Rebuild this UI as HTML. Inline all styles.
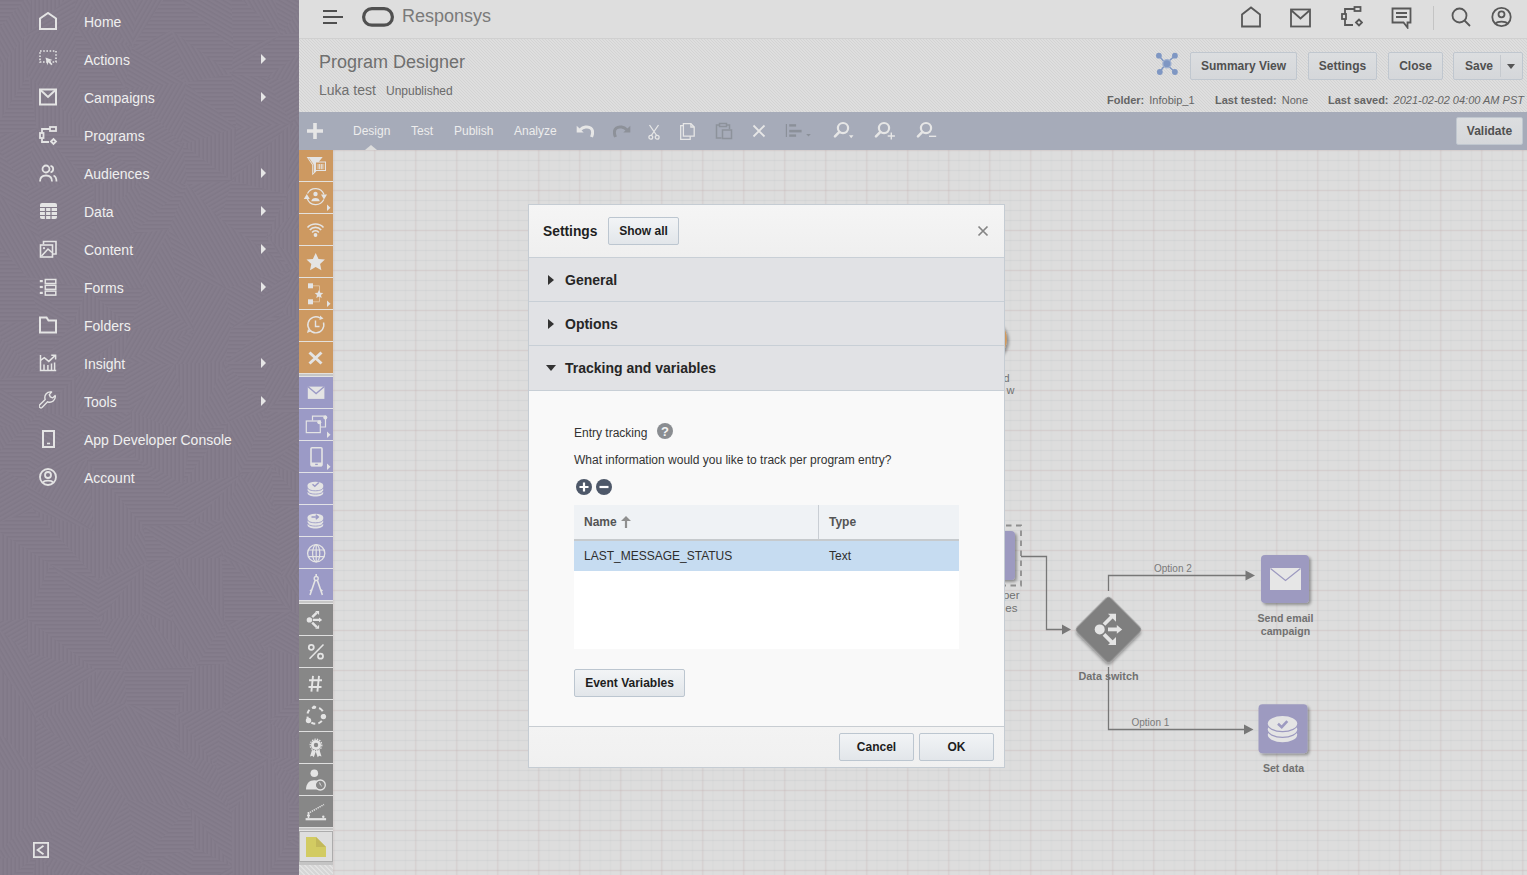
<!DOCTYPE html>
<html><head><meta charset="utf-8">
<style>
*{box-sizing:border-box;margin:0;padding:0}
html,body{width:1527px;height:875px;overflow:hidden}
body{position:relative;font-family:"Liberation Sans",sans-serif;background:#dcdcdc}
.a{position:absolute}
.t{position:absolute;white-space:nowrap;line-height:1}
#side{left:0;top:0;width:299px;height:875px;background:#857d8c}
#side .t{left:84px;font-size:14px;color:#efefef}
#side .ar{position:absolute;left:261px;width:0;height:0;border-left:5px solid #e6e6e6;border-top:5px solid transparent;border-bottom:5px solid transparent}
#side svg{position:absolute;left:39px}
#top{left:299px;top:0;width:1228px;height:39px;background:#dedede;border-bottom:1px solid #d0d0d0}
#ph{left:299px;top:39px;width:1228px;height:73px;background:#dedede;
}
#tb{left:299px;top:112px;width:1228px;height:38px;background:#a6abb9}
#cv{left:333px;top:150px;width:1194px;height:725px;background:#dddddd}
#pal{left:299px;top:150px;width:34px;height:725px;background:#dcdcdc}
.btn{position:absolute;border:1px solid #c0c7cf;border-radius:2px;background:linear-gradient(#dcdee0,#d5d7da);color:#505050;font-size:12px;font-weight:bold;text-align:center}
#dlg{left:528px;top:204px;width:477px;height:564px;background:#f9f9f9;border:1px solid #c5ccd3}
.dbtn{position:absolute;border:1px solid #bcc6d0;border-radius:2px;background:linear-gradient(#f2f4f6,#e2e6ea);color:#1d1d1d;font-size:12px;font-weight:bold;text-align:center}
.sec{position:absolute;left:0;width:475px;height:44px;background:#e1e2e5;border-bottom:1px solid #c8cfd6}
.sec .t{font-size:14px;font-weight:bold;color:#262626;left:36px;top:15px}
.tri{position:absolute;width:0;height:0}
</style></head><body>

<!-- SIDEBAR -->
<div id="side" class="a">
<svg class="a" style="left:0;top:0" width="299" height="875"><defs><pattern id="sp0" width="4" height="4" patternUnits="userSpaceOnUse" patternTransform="rotate(0)"><rect width="4" height="1.6" fill="#7b7382"/></pattern><pattern id="sp1" width="4" height="4" patternUnits="userSpaceOnUse" patternTransform="rotate(30)"><rect width="4" height="1.6" fill="#7b7382"/></pattern><pattern id="sp2" width="4" height="4" patternUnits="userSpaceOnUse" patternTransform="rotate(60)"><rect width="4" height="1.6" fill="#7b7382"/></pattern><pattern id="sp3" width="4" height="4" patternUnits="userSpaceOnUse" patternTransform="rotate(90)"><rect width="4" height="1.6" fill="#7b7382"/></pattern><pattern id="sp4" width="4" height="4" patternUnits="userSpaceOnUse" patternTransform="rotate(120)"><rect width="4" height="1.6" fill="#7b7382"/></pattern><pattern id="sp5" width="4" height="4" patternUnits="userSpaceOnUse" patternTransform="rotate(150)"><rect width="4" height="1.6" fill="#7b7382"/></pattern></defs><path d="M-10.0 -10.0L33.1 -10.0L-10.0 38.2zM170.0 -10.0L171.5 30.3L131.9 47.2zM170.0 -10.0L233.6 50.5L171.5 30.3zM231.0 -10.0L280.2 35.1L233.6 50.5zM74.0 26.5L125.1 88.3L80.6 94.9zM171.5 30.3L233.6 50.5L231.3 73.8zM280.2 35.1L265.7 77.8L231.3 73.8zM280.2 35.1L339.3 25.3L265.7 77.8zM339.3 25.3L374.0 48.0L331.1 84.0zM28.0 75.3L36.7 128.4L-10.0 136.4zM185.9 82.4L231.3 73.8L236.4 128.1zM36.7 128.4L94.2 139.6L93.4 184.0zM94.2 139.6L126.8 136.1L144.5 176.8zM182.7 144.5L232.2 180.8L187.5 184.6zM187.5 184.6L168.6 228.9L130.8 234.7zM232.2 180.8L287.5 194.5L265.7 237.5zM232.2 180.8L265.7 237.5L220.7 219.3zM-10.0 235.6L26.3 276.6L-10.0 288.4zM220.7 219.3L265.7 237.5L290.8 268.2zM-10.0 288.4L26.3 276.6L-10.0 325.6zM26.3 276.6L40.5 319.4L-10.0 325.6zM26.3 276.6L87.4 288.7L72.1 323.7zM87.4 288.7L142.9 288.2L130.3 327.9zM40.5 319.4L72.1 323.7L35.0 371.2zM230.4 329.3L282.9 313.5L225.5 361.5zM-10.0 382.3L35.0 371.2L41.2 412.2zM35.0 371.2L74.9 377.8L41.2 412.2zM121.7 361.9L130.2 411.4L79.1 417.7zM225.5 361.5L264.0 364.2L266.4 410.9zM314.8 370.2L321.6 415.4L266.4 410.9zM314.8 370.2L374.0 360.7L321.6 415.4zM41.2 412.2L24.6 482.6L-10.0 460.5zM191.8 435.8L229.0 421.5L182.8 483.4zM266.4 410.9L271.3 466.3L240.2 475.5zM86.8 460.1L135.2 456.8L143.9 526.6zM135.2 456.8L190.9 524.7L143.9 526.6zM271.3 466.3L312.8 511.8L274.0 504.8zM-10.0 525.8L33.2 510.2L50.8 564.5zM33.2 510.2L98.2 579.7L50.8 564.5zM143.9 526.6L174.2 558.4L146.7 562.2zM312.8 511.8L374.0 511.3L374.0 570.3zM50.8 564.5L97.5 621.9L26.4 618.5zM221.5 557.7L291.2 611.1L225.3 622.4zM26.4 618.5L97.5 621.9L97.3 670.6zM97.5 621.9L124.1 671.1L97.3 670.6zM225.3 622.4L225.8 663.4L195.4 666.4zM124.1 671.1L195.4 666.4L174.7 712.4zM124.1 671.1L174.7 712.4L127.1 704.2zM339.2 666.2L321.9 708.8L267.7 721.5zM189.6 806.2L194.4 847.3L139.6 864.5zM289.5 804.4L329.2 806.2L287.5 843.8zM36.7 854.9L26.0 906.7L-10.0 894.7zM139.6 864.5L124.3 908.1L94.0 913.1zM194.4 847.3L231.7 866.4L186.5 892.0zM287.5 843.8L270.1 914.7L240.7 915.1zM287.5 843.8L315.4 852.4L270.1 914.7zM315.4 852.4L323.2 901.6L270.1 914.7zM124.3 908.1L186.5 892.0L132.1 950.0zM186.5 892.0L182.4 950.0L132.1 950.0zM270.1 914.7L323.2 901.6L269.5 950.0zM323.2 901.6L320.9 950.0L269.5 950.0z" fill="url(#sp0)" fill-opacity=".5"/><path d="M170.0 -10.0L231.0 -10.0L233.6 50.5zM274.2 -10.0L313.6 -10.0L280.2 35.1zM131.9 47.2L185.9 82.4L125.1 88.3zM185.9 82.4L236.4 128.1L182.7 144.5zM231.3 73.8L265.7 77.8L291.4 123.3zM231.3 73.8L291.4 123.3L236.4 128.1zM331.1 84.0L374.0 80.8L323.7 141.2zM-10.0 136.4L25.1 186.7L-10.0 181.7zM126.8 136.1L182.7 144.5L144.5 176.8zM-10.0 181.7L25.1 186.7L42.1 243.8zM144.5 176.8L187.5 184.6L130.8 234.7zM42.1 243.8L95.0 224.0L87.4 288.7zM168.6 228.9L226.0 288.8L175.8 275.6zM315.6 222.9L374.0 226.9L316.9 270.5zM374.0 226.9L374.0 270.5L316.9 270.5zM26.3 276.6L72.1 323.7L40.5 319.4zM226.0 288.8L290.8 268.2L230.4 329.3zM194.7 331.3L173.8 364.5L121.7 361.9zM374.0 336.5L374.0 360.7L314.8 370.2zM-10.0 382.3L41.2 412.2L-10.0 432.5zM41.2 412.2L79.1 417.7L24.6 482.6zM79.1 417.7L130.2 411.4L86.8 460.1zM321.6 415.4L316.7 477.6L271.3 466.3zM321.6 415.4L374.0 431.2L374.0 470.9zM24.6 482.6L94.7 531.6L33.2 510.2zM374.0 470.9L374.0 511.3L312.8 511.8zM143.9 526.6L190.9 524.7L174.2 558.4zM190.9 524.7L222.3 518.5L174.2 558.4zM274.0 504.8L281.5 577.2L221.5 557.7zM50.8 564.5L98.2 579.7L97.5 621.9zM146.7 562.2L173.0 622.1L141.0 613.4zM335.5 565.4L374.0 570.3L374.0 620.3zM291.2 611.1L323.2 626.5L267.7 648.4zM323.2 626.5L339.2 666.2L267.7 648.4zM225.8 663.4L267.7 648.4L223.3 707.7zM374.0 662.7L374.0 712.3L321.9 708.8zM127.1 704.2L174.7 712.4L180.3 749.1zM223.3 707.7L268.8 757.3L216.1 766.4zM35.8 769.7L86.0 758.9L75.0 807.7zM35.8 769.7L75.0 807.7L39.6 814.0zM134.7 744.5L180.3 749.1L189.6 806.2zM180.3 749.1L231.7 813.3L189.6 806.2zM75.0 807.7L85.4 866.4L36.7 854.9zM127.0 799.8L189.6 806.2L139.6 864.5zM189.6 806.2L231.7 813.3L231.7 866.4zM329.2 806.2L315.4 852.4L287.5 843.8zM85.4 866.4L139.6 864.5L94.0 913.1zM139.6 864.5L194.4 847.3L186.5 892.0zM315.4 852.4L374.0 842.0L323.2 901.6zM26.0 906.7L94.0 913.1L76.5 950.0zM240.7 915.1L269.5 950.0L225.5 950.0z" fill="url(#sp1)" fill-opacity=".5"/><path d="M33.1 -10.0L25.0 36.1L-10.0 38.2zM76.2 -10.0L138.2 -10.0L131.9 47.2zM231.0 -10.0L274.2 -10.0L280.2 35.1zM313.6 -10.0L339.3 25.3L280.2 35.1zM-10.0 38.2L25.0 36.1L-10.0 80.1zM74.0 26.5L131.9 47.2L125.1 88.3zM171.5 30.3L231.3 73.8L185.9 82.4zM374.0 48.0L374.0 80.8L331.1 84.0zM80.6 94.9L125.1 88.3L94.2 139.6zM331.1 84.0L323.7 141.2L291.4 123.3zM374.0 80.8L374.0 124.3L323.7 141.2zM36.7 128.4L93.4 184.0L25.1 186.7zM323.7 141.2L374.0 124.3L325.3 186.6zM-10.0 181.7L42.1 243.8L-10.0 235.6zM144.5 176.8L130.8 234.7L95.0 224.0zM187.5 184.6L220.7 219.3L168.6 228.9zM325.3 186.6L374.0 169.7L315.6 222.9zM-10.0 235.6L42.1 243.8L26.3 276.6zM42.1 243.8L87.4 288.7L26.3 276.6zM95.0 224.0L130.8 234.7L142.9 288.2zM95.0 224.0L142.9 288.2L87.4 288.7zM168.6 228.9L175.8 275.6L142.9 288.2zM168.6 228.9L220.7 219.3L226.0 288.8zM220.7 219.3L290.8 268.2L226.0 288.8zM265.7 237.5L316.9 270.5L290.8 268.2zM142.9 288.2L175.8 275.6L194.7 331.3zM225.5 361.5L229.0 421.5L191.8 435.8zM-10.0 432.5L41.2 412.2L-10.0 460.5zM229.0 421.5L266.4 410.9L240.2 475.5zM321.6 415.4L374.0 470.9L316.7 477.6zM240.2 475.5L274.0 504.8L222.3 518.5zM143.9 526.6L146.7 562.2L98.2 579.7zM222.3 518.5L274.0 504.8L221.5 557.7zM174.2 558.4L225.3 622.4L173.0 622.1zM221.5 557.7L281.5 577.2L291.2 611.1zM281.5 577.2L335.5 565.4L323.2 626.5zM-10.0 622.4L27.6 652.2L-10.0 652.8zM141.0 613.4L195.4 666.4L124.1 671.1zM173.0 622.1L225.3 622.4L195.4 666.4zM225.3 622.4L267.7 648.4L225.8 663.4zM-10.0 652.8L27.6 652.2L36.1 720.4zM-10.0 722.1L35.8 769.7L-10.0 769.3zM36.1 720.4L95.1 701.9L86.0 758.9zM127.1 704.2L134.7 744.5L86.0 758.9zM127.1 704.2L180.3 749.1L134.7 744.5zM374.0 712.3L374.0 753.1L332.3 759.6zM86.0 758.9L134.7 744.5L127.0 799.8zM134.7 744.5L189.6 806.2L127.0 799.8zM332.3 759.6L374.0 753.1L374.0 806.3zM332.3 759.6L374.0 806.3L329.2 806.2zM39.6 814.0L36.7 854.9L-10.0 859.4zM39.6 814.0L75.0 807.7L36.7 854.9zM240.7 915.1L270.1 914.7L269.5 950.0zM374.0 915.7L374.0 950.0L320.9 950.0z" fill="url(#sp2)" fill-opacity=".5"/><path d="M33.1 -10.0L76.2 -10.0L25.0 36.1zM313.6 -10.0L374.0 -10.0L339.3 25.3zM25.0 36.1L28.0 75.3L-10.0 80.1zM-10.0 80.1L28.0 75.3L-10.0 136.4zM28.0 75.3L94.2 139.6L36.7 128.4zM182.7 144.5L236.4 128.1L232.2 180.8zM291.4 123.3L287.5 194.5L232.2 180.8zM323.7 141.2L325.3 186.6L287.5 194.5zM93.4 184.0L144.5 176.8L95.0 224.0zM287.5 194.5L325.3 186.6L265.7 237.5zM265.7 237.5L315.6 222.9L316.9 270.5zM87.4 288.7L130.3 327.9L72.1 323.7zM316.9 270.5L337.2 333.8L282.9 313.5zM374.0 270.5L374.0 336.5L337.2 333.8zM130.3 327.9L121.7 361.9L74.9 377.8zM74.9 377.8L79.1 417.7L41.2 412.2zM173.8 364.5L225.5 361.5L191.8 435.8zM130.2 411.4L191.8 435.8L135.2 456.8zM191.8 435.8L182.8 483.4L135.2 456.8zM229.0 421.5L240.2 475.5L182.8 483.4zM86.8 460.1L143.9 526.6L94.7 531.6zM240.2 475.5L222.3 518.5L190.9 524.7zM271.3 466.3L316.7 477.6L312.8 511.8zM-10.0 525.8L50.8 564.5L-10.0 571.4zM33.2 510.2L94.7 531.6L98.2 579.7zM94.7 531.6L143.9 526.6L98.2 579.7zM-10.0 571.4L50.8 564.5L26.4 618.5zM-10.0 571.4L26.4 618.5L-10.0 622.4zM146.7 562.2L141.0 613.4L97.5 621.9zM174.2 558.4L221.5 557.7L225.3 622.4zM281.5 577.2L323.2 626.5L291.2 611.1zM26.4 618.5L97.3 670.6L27.6 652.2zM141.0 613.4L173.0 622.1L195.4 666.4zM323.2 626.5L374.0 620.3L339.2 666.2zM-10.0 652.8L36.1 720.4L-10.0 722.1zM97.3 670.6L95.1 701.9L36.1 720.4zM195.4 666.4L225.8 663.4L174.7 712.4zM225.8 663.4L223.3 707.7L174.7 712.4zM267.7 648.4L339.2 666.2L267.7 721.5zM-10.0 722.1L36.1 720.4L35.8 769.7zM174.7 712.4L216.1 766.4L180.3 749.1zM267.7 721.5L332.3 759.6L268.8 757.3zM321.9 708.8L374.0 712.3L332.3 759.6zM-10.0 769.3L35.8 769.7L-10.0 806.5zM35.8 769.7L39.6 814.0L-10.0 806.5zM268.8 757.3L289.5 804.4L231.7 813.3zM-10.0 806.5L39.6 814.0L-10.0 859.4zM189.6 806.2L231.7 866.4L194.4 847.3zM231.7 813.3L289.5 804.4L287.5 843.8zM231.7 813.3L287.5 843.8L231.7 866.4zM329.2 806.2L374.0 842.0L315.4 852.4zM-10.0 859.4L36.7 854.9L-10.0 894.7zM36.7 854.9L94.0 913.1L26.0 906.7zM231.7 866.4L287.5 843.8L240.7 915.1zM94.0 913.1L132.1 950.0L76.5 950.0zM323.2 901.6L374.0 915.7L320.9 950.0z" fill="url(#sp3)" fill-opacity=".5"/><path d="M76.2 -10.0L131.9 47.2L74.0 26.5zM138.2 -10.0L170.0 -10.0L131.9 47.2zM25.0 36.1L74.0 26.5L80.6 94.9zM25.0 36.1L80.6 94.9L28.0 75.3zM339.3 25.3L331.1 84.0L265.7 77.8zM28.0 75.3L80.6 94.9L94.2 139.6zM125.1 88.3L126.8 136.1L94.2 139.6zM125.1 88.3L185.9 82.4L182.7 144.5zM182.7 144.5L187.5 184.6L144.5 176.8zM291.4 123.3L323.7 141.2L287.5 194.5zM325.3 186.6L315.6 222.9L265.7 237.5zM374.0 169.7L374.0 226.9L315.6 222.9zM130.8 234.7L168.6 228.9L142.9 288.2zM175.8 275.6L226.0 288.8L230.4 329.3zM175.8 275.6L230.4 329.3L194.7 331.3zM290.8 268.2L316.9 270.5L282.9 313.5zM-10.0 325.6L35.0 371.2L-10.0 382.3zM130.3 327.9L194.7 331.3L121.7 361.9zM194.7 331.3L230.4 329.3L173.8 364.5zM230.4 329.3L225.5 361.5L173.8 364.5zM74.9 377.8L121.7 361.9L79.1 417.7zM173.8 364.5L191.8 435.8L130.2 411.4zM264.0 364.2L314.8 370.2L266.4 410.9zM24.6 482.6L86.8 460.1L94.7 531.6zM240.2 475.5L271.3 466.3L274.0 504.8zM316.7 477.6L374.0 470.9L312.8 511.8zM312.8 511.8L335.5 565.4L281.5 577.2zM97.5 621.9L141.0 613.4L124.1 671.1zM374.0 620.3L374.0 662.7L339.2 666.2zM97.3 670.6L124.1 671.1L95.1 701.9zM124.1 671.1L127.1 704.2L95.1 701.9zM339.2 666.2L374.0 662.7L321.9 708.8zM267.7 721.5L321.9 708.8L332.3 759.6zM86.0 758.9L127.0 799.8L75.0 807.7zM180.3 749.1L216.1 766.4L231.7 813.3zM268.8 757.3L329.2 806.2L289.5 804.4zM75.0 807.7L127.0 799.8L85.4 866.4zM36.7 854.9L85.4 866.4L94.0 913.1zM139.6 864.5L186.5 892.0L124.3 908.1zM374.0 842.0L374.0 915.7L323.2 901.6zM186.5 892.0L240.7 915.1L225.5 950.0zM186.5 892.0L225.5 950.0L182.4 950.0z" fill="url(#sp4)" fill-opacity=".5"/><path d="M76.2 -10.0L74.0 26.5L25.0 36.1zM374.0 -10.0L374.0 48.0L339.3 25.3zM131.9 47.2L171.5 30.3L185.9 82.4zM233.6 50.5L280.2 35.1L231.3 73.8zM125.1 88.3L182.7 144.5L126.8 136.1zM265.7 77.8L331.1 84.0L291.4 123.3zM-10.0 136.4L36.7 128.4L25.1 186.7zM94.2 139.6L144.5 176.8L93.4 184.0zM236.4 128.1L291.4 123.3L232.2 180.8zM374.0 124.3L374.0 169.7L325.3 186.6zM25.1 186.7L93.4 184.0L95.0 224.0zM25.1 186.7L95.0 224.0L42.1 243.8zM187.5 184.6L232.2 180.8L220.7 219.3zM142.9 288.2L194.7 331.3L130.3 327.9zM290.8 268.2L282.9 313.5L230.4 329.3zM316.9 270.5L374.0 270.5L337.2 333.8zM-10.0 325.6L40.5 319.4L35.0 371.2zM72.1 323.7L74.9 377.8L35.0 371.2zM72.1 323.7L130.3 327.9L74.9 377.8zM282.9 313.5L264.0 364.2L225.5 361.5zM282.9 313.5L337.2 333.8L264.0 364.2zM337.2 333.8L314.8 370.2L264.0 364.2zM337.2 333.8L374.0 336.5L314.8 370.2zM121.7 361.9L173.8 364.5L130.2 411.4zM225.5 361.5L266.4 410.9L229.0 421.5zM374.0 360.7L374.0 431.2L321.6 415.4zM79.1 417.7L86.8 460.1L24.6 482.6zM130.2 411.4L135.2 456.8L86.8 460.1zM266.4 410.9L321.6 415.4L271.3 466.3zM-10.0 460.5L24.6 482.6L33.2 510.2zM-10.0 460.5L33.2 510.2L-10.0 525.8zM135.2 456.8L182.8 483.4L190.9 524.7zM182.8 483.4L240.2 475.5L190.9 524.7zM222.3 518.5L221.5 557.7L174.2 558.4zM274.0 504.8L312.8 511.8L281.5 577.2zM312.8 511.8L374.0 570.3L335.5 565.4zM98.2 579.7L146.7 562.2L97.5 621.9zM146.7 562.2L174.2 558.4L173.0 622.1zM335.5 565.4L374.0 620.3L323.2 626.5zM-10.0 622.4L26.4 618.5L27.6 652.2zM225.3 622.4L291.2 611.1L267.7 648.4zM27.6 652.2L97.3 670.6L36.1 720.4zM267.7 648.4L267.7 721.5L223.3 707.7zM36.1 720.4L86.0 758.9L35.8 769.7zM95.1 701.9L127.1 704.2L86.0 758.9zM174.7 712.4L223.3 707.7L216.1 766.4zM223.3 707.7L267.7 721.5L268.8 757.3zM216.1 766.4L268.8 757.3L231.7 813.3zM268.8 757.3L332.3 759.6L329.2 806.2zM127.0 799.8L139.6 864.5L85.4 866.4zM329.2 806.2L374.0 806.3L374.0 842.0zM231.7 866.4L240.7 915.1L186.5 892.0zM-10.0 894.7L26.0 906.7L-10.0 950.0zM26.0 906.7L47.3 950.0L-10.0 950.0zM26.0 906.7L76.5 950.0L47.3 950.0zM94.0 913.1L124.3 908.1L132.1 950.0z" fill="url(#sp5)" fill-opacity=".5"/></svg>
<svg style="top:12px" width="20" height="20" viewBox="0 0 20 20"><path d="M1 17V6.5L9 1l8 5.5V17z" fill="none" stroke="#e4e4e4" stroke-width="2"/></svg><svg style="top:50px" width="20" height="20" viewBox="0 0 20 20"><rect x="1" y="1" width="16" height="11" fill="none" stroke="#e4e4e4" stroke-width="1.6" stroke-dasharray="1.6 1.6"/><path d="M6.5 7.5l7 2.5-3 1 3 3-1.2 1.2-3-3-1 3z" fill="#e4e4e4"/></svg><svg style="top:88px" width="20" height="20" viewBox="0 0 20 20"><rect x="1" y="1.5" width="16" height="15" fill="none" stroke="#e4e4e4" stroke-width="2"/><path d="M1.5 2l7.5 7 7.5-7" fill="none" stroke="#e4e4e4" stroke-width="2"/></svg><svg style="top:126px" width="20" height="20" viewBox="0 0 20 20"><g fill="none" stroke="#e4e4e4" stroke-width="1.8"><rect x="11" y="1" width="6" height="4"/><rect x="1" y="7" width="3.5" height="5"/><path d="M11 3H3v4M3 12v4h7"/><path d="M12 15.5l2.5-2.5 2.5 2.5-2.5 2.5z"/></g></svg><svg style="top:164px" width="20" height="20" viewBox="0 0 20 20"><g fill="none" stroke="#e4e4e4" stroke-width="1.8"><circle cx="7" cy="5" r="3.5"/><path d="M1 17.5c0-4 2.5-6 6-6s6 2 6 6"/><path d="M11.5 1.8a3.3 3.3 0 0 1 0 6.5M14.5 11.5c2 .8 3 2.8 3 6"/></g></svg><svg style="top:202px" width="20" height="20" viewBox="0 0 20 20"><rect x="1" y="1" width="17" height="16" rx="2" fill="#e4e4e4"/><g stroke="#837b8a" stroke-width="1.2"><path d="M1 5.5h17M1 9.5h17M1 13.5h17M6.5 5.5v12M12 5.5v12"/></g></svg><svg style="top:240px" width="20" height="20" viewBox="0 0 20 20"><g fill="none" stroke="#e4e4e4" stroke-width="1.6"><path d="M4.5 4.3V1.5h12.5v12.5h-3.5"/><rect x="1.5" y="5" width="12" height="12"/><path d="M2.5 16l6.5-7 4 3.5"/></g><circle cx="5" cy="8.2" r="1.1" fill="#e4e4e4"/></svg><svg style="top:278px" width="20" height="20" viewBox="0 0 20 20"><g fill="#e4e4e4"><rect x="0.8" y="2" width="3" height="2.2"/><rect x="0.8" y="7.9" width="3" height="2.2"/><rect x="0.8" y="13.8" width="3" height="2.2"/></g><g fill="none" stroke="#e4e4e4" stroke-width="1.5"><rect x="6.3" y="1.5" width="10.5" height="4"/><rect x="6.3" y="7.3" width="10.5" height="4"/><rect x="6.3" y="13.1" width="10.5" height="4"/></g></svg><svg style="top:316px" width="20" height="20" viewBox="0 0 20 20"><path d="M1 16.5V1.5h6.5l2 3H17v12z" fill="none" stroke="#e4e4e4" stroke-width="2"/></svg><svg style="top:354px" width="20" height="20" viewBox="0 0 20 20"><g fill="none" stroke="#e4e4e4" stroke-width="1.5"><path d="M1.5 1v15.5H17.2"/><path d="M1.5 6.4L5.3 3.6 9.8 7.4 16 1.6"/><path d="M12.3 1.2h4.3v4.3"/><path d="M5 10.5v6M8.9 11v5.5M12.5 9.5v7M15.6 8.5v8"/></g></svg><svg style="top:391px" width="20" height="20" viewBox="0 0 20 20"><path d="M8.6 10.8L3 16.4a1.7 1.7 0 0 1-2.4-2.4L6.2 8.4A5.6 5.6 0 0 1 12.6 1l-2.3 2.6 1 2.3 2.3 1L16.2 4.6A5.6 5.6 0 0 1 8.6 10.8z" fill="none" stroke="#e4e4e4" stroke-width="1.4" stroke-linejoin="round"/></svg><svg style="top:430px" width="20" height="20" viewBox="0 0 20 20"><rect x="4" y="1" width="11" height="16" fill="none" stroke="#e4e4e4" stroke-width="2"/><path d="M8 13.5h3" stroke="#e4e4e4" stroke-width="1.6"/></svg><svg style="top:468px" width="20" height="20" viewBox="0 0 20 20"><g fill="none" stroke="#e4e4e4" stroke-width="1.8"><circle cx="9" cy="9" r="8"/><circle cx="9" cy="7" r="3"/><path d="M4 14.5c1.5-2.5 8.5-2.5 10 0"/></g></svg><svg style="left:32px;top:841px" width="18" height="18" viewBox="0 0 18 18"><rect x="1.9" y="1.9" width="14.2" height="14.2" fill="none" stroke="#e4e4e4" stroke-width="1.8"/><path d="M11.5 4.8L5.6 8.9l5.9 4.3" fill="none" stroke="#e4e4e4" stroke-width="1.8"/></svg>
 <div class="t" style="top:15px">Home</div>
 <div class="t" style="top:53px">Actions</div><div class="ar" style="top:54px"></div>
 <div class="t" style="top:91px">Campaigns</div><div class="ar" style="top:92px"></div>
 <div class="t" style="top:129px">Programs</div>
 <div class="t" style="top:167px">Audiences</div><div class="ar" style="top:168px"></div>
 <div class="t" style="top:205px">Data</div><div class="ar" style="top:206px"></div>
 <div class="t" style="top:243px">Content</div><div class="ar" style="top:244px"></div>
 <div class="t" style="top:281px">Forms</div><div class="ar" style="top:282px"></div>
 <div class="t" style="top:319px">Folders</div>
 <div class="t" style="top:357px">Insight</div><div class="ar" style="top:358px"></div>
 <div class="t" style="top:395px">Tools</div><div class="ar" style="top:396px"></div>
 <div class="t" style="top:433px">App Developer Console</div>
 <div class="t" style="top:471px">Account</div>
</div>

<!-- TOP BAR -->
<div id="top" class="a">
 <svg class="a" style="left:22px;top:9px" width="22" height="16" viewBox="0 0 22 16"><g fill="#4f4f4f"><rect x="2" y="1" width="14" height="2"/><rect x="2" y="7" width="20" height="2"/><rect x="2" y="13" width="14" height="2"/></g></svg>
 <svg class="a" style="left:63px;top:7px" width="32" height="20" viewBox="0 0 32 20"><rect x="1.6" y="1.6" width="28.8" height="16.6" rx="8.3" fill="none" stroke="#505050" stroke-width="3.2"/></svg>
 <div class="t" style="left:103px;top:7px;font-size:18px;color:#7a7a7a">Responsys</div>
 <svg class="a" style="left:941px;top:6px" width="22" height="22" viewBox="0 0 22 22"><path d="M2 20.5V8.5L11 1.5 20 8.5v12z" fill="none" stroke="#585858" stroke-width="1.8"/></svg>
 <svg class="a" style="left:991px;top:8px" width="22" height="20" viewBox="0 0 22 20"><rect x="1" y="1.5" width="19" height="17" fill="none" stroke="#585858" stroke-width="1.8"/><path d="M1.5 2.5l9 8 9-8" fill="none" stroke="#585858" stroke-width="1.8"/></svg>
 <svg class="a" style="left:1042px;top:5px" width="22" height="22" viewBox="0 0 22 22"><g fill="none" stroke="#585858" stroke-width="1.8"><rect x="13.5" y="2" width="6" height="4"/><rect x="1" y="9" width="4" height="5"/><path d="M13.5 4H4v5M4 14v6h8"/><path d="M15 17.5l3-3 3 3-3 3z"/></g></svg>
 <svg class="a" style="left:1092px;top:7px" width="22" height="22" viewBox="0 0 22 22"><g fill="none" stroke="#585858" stroke-width="1.8"><path d="M1.5 1.5h18v14h-3v5l-4-5H1.5z"/><path d="M5 6h11M5 10h11"/></g></svg>
 <div class="a" style="left:1134px;top:6px;width:1px;height:24px;background:#c4c4c4"></div>
 <svg class="a" style="left:1152px;top:7px" width="22" height="22" viewBox="0 0 22 22"><g fill="none" stroke="#585858" stroke-width="1.8"><circle cx="8.5" cy="8.5" r="7"/><path d="M13.5 13.5l5.5 5.5"/></g></svg>
 <svg class="a" style="left:1192px;top:6px" width="22" height="22" viewBox="0 0 22 22"><g fill="none" stroke="#585858" stroke-width="1.8"><circle cx="10.5" cy="11" r="9.2"/><circle cx="10.5" cy="8.3" r="3"/><path d="M4.5 17.5c2-2.6 10-2.6 12 0"/></g></svg>
</div>
<div id="ph" class="a">
<svg class="a" style="left:0;top:0" width="1228" height="74" shape-rendering="crispEdges"><defs><pattern id="st" width="3" height="3" patternUnits="userSpaceOnUse"><rect x="0" y="0" width="1" height="1" fill="#d3d3d3"/><rect x="1" y="1" width="1" height="1" fill="#d3d3d3"/><rect x="2" y="2" width="1" height="1" fill="#d3d3d3"/></pattern></defs><rect width="1228" height="74" fill="url(#st)"/></svg>
 <div class="t" style="left:20px;top:14px;font-size:18px;color:#6f6f6f">Program Designer</div>
 <div class="t" style="left:20px;top:44px;font-size:14px;color:#6f6f6f">Luka test</div>
 <div class="t" style="left:87px;top:46px;font-size:12px;color:#6a6a6a">Unpublished</div>
 <svg class="a" style="left:854px;top:12px" width="26" height="26" viewBox="0 0 26 26"><g stroke="#7f97c3" stroke-width="1.5"><path d="M5.9 4.7l7 8M21.9 4.7l-9 8M6.8 21l6-8.3M21.9 21l-9-8.3"/></g><g fill="#7f97c3"><circle cx="5.9" cy="4.7" r="2.9"/><circle cx="21.9" cy="4.7" r="2.9"/><circle cx="6.8" cy="21" r="2.9"/><circle cx="21.9" cy="21" r="2.9"/><circle cx="13.9" cy="12.7" r="4.7" fill="#9fb1d0"/><circle cx="13.9" cy="12.7" r="3.4"/></g></svg>
 <div class="btn" style="left:891px;top:13px;width:107px;height:28px;line-height:26px">Summary View</div>
 <div class="btn" style="left:1009px;top:13px;width:69px;height:28px;line-height:26px">Settings</div>
 <div class="btn" style="left:1089px;top:13px;width:55px;height:28px;line-height:26px">Close</div>
 <div class="btn" style="left:1154px;top:13px;width:70px;height:28px;line-height:26px;text-align:left;padding-left:11px">Save<div class="a" style="left:46px;top:2px;width:1px;height:22px;background:#c5c9ce"></div><div class="a" style="left:53px;top:11px;width:0;height:0;border-top:5px solid #555;border-left:4.5px solid transparent;border-right:4.5px solid transparent"></div></div>
 <div class="t" style="left:808px;top:56px;font-size:11px;color:#656565"><b>Folder:</b><span style="margin-left:5px">Infobip_1</span></div>
 <div class="t" style="left:916px;top:56px;font-size:11px;color:#656565"><b>Last tested:</b><span style="margin-left:5px">None</span></div>
 <div class="t" style="left:1029px;top:56px;font-size:11px;color:#656565"><b>Last saved:</b><i style="margin-left:5px">2021-02-02 04:00 AM PST</i></div>
</div>
<div id="tb" class="a">
 <svg class="a" style="left:8px;top:11px" width="17" height="17" viewBox="0 0 17 17"><path d="M8 0v16M0 8h16" stroke="#e6e6e6" stroke-width="3.6"/></svg>
 <div class="t" style="left:54px;top:13px;font-size:12px;color:#ededed">Design</div>
 <div class="t" style="left:112px;top:13px;font-size:12px;color:#ededed">Test</div>
 <div class="t" style="left:155px;top:13px;font-size:12px;color:#ededed">Publish</div>
 <div class="t" style="left:215px;top:13px;font-size:12px;color:#ededed">Analyze</div>
 <div class="a" style="left:66px;top:33px;width:0;height:0;border-bottom:5px solid #dcdcdc;border-left:6px solid transparent;border-right:6px solid transparent"></div>
 <svg class="a" style="left:277px;top:12px" width="18" height="15" viewBox="0 0 18 15"><path d="M0.7 1.7v6.8h7z" fill="#e6e6e6"/><path d="M4.2 5.8C7 3 12 1.8 14.8 4.2 17.3 6.4 16.8 10 15.5 13" fill="none" stroke="#e6e6e6" stroke-width="3"/></svg>
 <svg class="a" style="left:314px;top:12px" width="18" height="15" viewBox="0 0 18 15"><g transform="translate(18 0) scale(-1 1)"><path d="M0.7 1.7v6.8h7z" fill="#8d9199"/><path d="M4.2 5.8C7 3 12 1.8 14.8 4.2 17.3 6.4 16.8 10 15.5 13" fill="none" stroke="#8d9199" stroke-width="3"/></g></svg>
 <svg class="a" style="left:348px;top:12px" width="16" height="16" viewBox="0 0 16 16"><g fill="none" stroke="#e6e6e6" stroke-width="1.3"><path d="M2.5 1l7.2 10.5M11.5 1L4.3 11.5"/><circle cx="3.8" cy="13.2" r="1.9"/><circle cx="10.2" cy="13.2" r="1.9"/></g></svg>
 <svg class="a" style="left:381px;top:11px" width="16" height="18" viewBox="0 0 16 18"><g fill="none" stroke="#e6e6e6" stroke-width="1.3"><path d="M3 2.6H0.7v13.7h9.5v-3"/><path d="M3.4 0.7h7.5l3.3 3.3v9.2H3.4z"/><path d="M10.9 0.7v3.3h3.3"/></g></svg>
 <svg class="a" style="left:416px;top:10px" width="18" height="18" viewBox="0 0 18 18"><g fill="none" stroke="#8d929b" stroke-width="1.5"><path d="M4 3H1.5v13h5"/><path d="M12 3h2.5v4"/><rect x="4.5" y="1.5" width="7" height="3"/><rect x="7.5" y="8" width="9" height="8.5"/></g></svg>
 <svg class="a" style="left:453px;top:12px" width="14" height="14" viewBox="0 0 14 14"><path d="M1.5 1.5l11 11M12.5 1.5l-11 11" stroke="#e6e6e6" stroke-width="1.8"/></svg>
 <svg class="a" style="left:486px;top:11px" width="28" height="18" viewBox="0 0 28 18"><g fill="#8b9099"><rect x="0.8" y="1" width="1.2" height="13"/><rect x="4.2" y="1.2" width="6.9" height="2.4"/><rect x="4.2" y="6.8" width="12.4" height="2.6"/><rect x="4.2" y="11.4" width="6.9" height="2.4"/><path d="M21.2 11h4.6l-2.3 2.5z"/></g></svg>
 <svg class="a" style="left:531.6px;top:6px" width="26" height="22" viewBox="0 0 26 22"><circle cx="12" cy="10.1" r="5.1" fill="none" stroke="#e6e6e6" stroke-width="2.2"/><path d="M8.4 13.9L4 18.3" stroke="#e6e6e6" stroke-width="2.6" stroke-linecap="round"/><path d="M17.9 17.3h4.6l-2.3 3z" fill="#e6e6e6"/></svg>
 <svg class="a" style="left:573.1px;top:6px" width="26" height="22" viewBox="0 0 26 22"><circle cx="12" cy="10.1" r="5.1" fill="none" stroke="#e6e6e6" stroke-width="2.2"/><path d="M8.4 13.9L4 18.3" stroke="#e6e6e6" stroke-width="2.6" stroke-linecap="round"/><path d="M15.7 18h7.2M19.3 14.4v7.2" stroke="#e6e6e6" stroke-width="1.4"/></svg>
 <svg class="a" style="left:614.5px;top:6px" width="26" height="22" viewBox="0 0 26 22"><circle cx="12" cy="10.1" r="5.1" fill="none" stroke="#e6e6e6" stroke-width="2.2"/><path d="M8.4 13.9L4 18.3" stroke="#e6e6e6" stroke-width="2.6" stroke-linecap="round"/><path d="M15 18.3h7.2" stroke="#e6e6e6" stroke-width="1.4"/></svg>
 <div class="btn" style="left:1157px;top:5px;width:67px;height:28px;line-height:26px">Validate</div>
</div>
<div id="cv" class="a"><svg width="1194" height="725" style="position:absolute;left:0;top:0"><defs>
<pattern id="ghm" x="0" y="0" width="1194" height="40" patternUnits="userSpaceOnUse"><g fill="rgb(110,125,135)" fill-opacity=".065"><rect x="0" y="9.8" width="1194" height="1.4"/><rect x="0" y="19.8" width="1194" height="1.4"/><rect x="0" y="29.8" width="1194" height="1.4"/></g></pattern>
<pattern id="gvm" x="0.3" y="0" width="41" height="725" patternUnits="userSpaceOnUse"><g fill="rgb(110,125,135)" fill-opacity=".045"><rect x="10.05" y="0" width="1.4" height="725"/><rect x="20.3" y="0" width="1.4" height="725"/><rect x="30.55" y="0" width="1.4" height="725"/></g></pattern>
<pattern id="gv" x="0.3" y="0" width="41" height="725" patternUnits="userSpaceOnUse"><rect x="-0.25" y="0" width="1.5" height="725" fill="rgb(185,155,155)" fill-opacity=".21"/><rect x="40.75" y="0" width="1.5" height="725" fill="rgb(185,155,155)" fill-opacity=".21"/></pattern>
<pattern id="gh" x="0" y="0" width="1194" height="40" patternUnits="userSpaceOnUse"><rect x="0" y="-0.25" width="1194" height="1.5" fill="rgb(185,155,155)" fill-opacity=".21"/><rect x="0" y="39.75" width="1194" height="1.5" fill="rgb(185,155,155)" fill-opacity=".21"/></pattern>
</defs><rect width="1194" height="725" fill="url(#ghm)"/><rect width="1194" height="725" fill="url(#gvm)"/><rect width="1194" height="725" fill="url(#gh)"/><rect width="1194" height="725" fill="url(#gv)"/></svg></div>

<!-- CANVAS NODES (absolute page coords) -->
<svg class="a" style="left:333px;top:150px" width="1194" height="725" viewBox="333 150 1194 725">
 <defs><filter id="sh" x="-20%" y="-20%" width="150%" height="150%"><feGaussianBlur in="SourceAlpha" stdDeviation="1.5"/><feOffset dx="1.5" dy="2"/><feComponentTransfer><feFuncA type="linear" slope=".35"/></feComponentTransfer><feMerge><feMergeNode/><feMergeNode in="SourceGraphic"/></feMerge></filter></defs>
 <!-- orange node partially hidden -->
 <circle cx="986" cy="339" r="21" fill="#cd9961" filter="url(#sh)"/>
 <!-- partial purple node -->
 <rect x="966" y="525.5" width="55" height="60" fill="none" stroke="#8e8e8e" stroke-width="1.8" stroke-dasharray="5.5 4.5"/>
 <rect x="966" y="531" width="49" height="49" rx="4" fill="#9d9ac0" filter="url(#sh)"/>
 <g fill="none" stroke="#777" stroke-width="1.3">
  <path d="M1021 556.5H1046.5V629.5H1063"/>
  <path d="M1108.5 591V575.5H1247"/>
  <path d="M1108.5 667V729.5H1245"/>
 </g>
 <g fill="#777">
  <path d="M1071 629.5l-9-5v10z"/>
  <path d="M1255 575.5l-9.5-5v10z"/>
  <path d="M1253.5 729.5l-9.5-5v10z"/>
 </g>
 <!-- diamond -->
 <rect x="1084.5" y="605.5" width="48" height="48" rx="4" fill="#7f7f7f" transform="rotate(45 1108.5 629.5)" filter="url(#sh)"/>
 <g fill="#e4e4e4">
  <circle cx="1099.7" cy="629.4" r="5"/>
  <path d="M1104 624.5l8-8" stroke="#e4e4e4" stroke-width="3.8"/>
  <path d="M1108 613.8h8v8z"/>
  <path d="M1108 629.4h9.5" stroke="#e4e4e4" stroke-width="3.8"/>
  <path d="M1116.8 625l5.4 4.4-5.4 4.4z"/>
  <path d="M1104 634.3l8 8" stroke="#e4e4e4" stroke-width="3.8"/>
  <path d="M1108 645h8v-8z"/>
 </g>
 <!-- send email -->
 <rect x="1261" y="555" width="48" height="48" rx="4" fill="#9d9ac0" filter="url(#sh)"/>
 <rect x="1270" y="568" width="31" height="22" fill="#e6e6e6"/>
 <path d="M1270.5 568.5l15 12 15-12" fill="none" stroke="#9d9ac0" stroke-width="1.3"/>
 <!-- set data -->
 <rect x="1258.5" y="704.3" width="49" height="49" rx="4" fill="#9d9ac0" filter="url(#sh)"/>
 <g fill="#e4e4e4">
  <ellipse cx="1282.5" cy="734.8" rx="14.7" ry="7.5"/>
  <path d="M1267.8 729.5a14.7 7.5 0 0 0 29.4 0" fill="none" stroke="#9d9ac0" stroke-width="1.9"/>
  <ellipse cx="1282.5" cy="729.2" rx="14.7" ry="7.5"/>
  <path d="M1267.8 723.8a14.7 7.5 0 0 0 29.4 0" fill="none" stroke="#9d9ac0" stroke-width="1.9"/>
  <ellipse cx="1282.5" cy="723.5" rx="14.7" ry="7.5"/>
 </g>
 <path d="M1278 723.8l3.7 3.3 5.6-6" fill="none" stroke="#9d9ac0" stroke-width="2.6"/>
 <g font-family="Liberation Sans" fill="#717171">
  <text x="1154" y="572" font-size="10" fill="#7a7a7a">Option 2</text>
  <text x="1131.5" y="725.5" font-size="10" fill="#7a7a7a">Option 1</text>
  <text x="1108.5" y="679.5" font-size="10.8" font-weight="bold" text-anchor="middle">Data switch</text>
  <text x="1285.5" y="621.5" font-size="10.6" font-weight="bold" text-anchor="middle">Send email</text>
  <text x="1285.5" y="634.5" font-size="10.6" font-weight="bold" text-anchor="middle">campaign</text>
  <text x="1283.5" y="772" font-size="10.6" font-weight="bold" text-anchor="middle">Set data</text>
  <text x="1019.5" y="599" font-size="11.5" text-anchor="end">per</text>
  <text x="1017.5" y="611.5" font-size="11.5" text-anchor="end">es</text>
  <text x="1009.5" y="381.5" font-size="11" text-anchor="end">d</text>
  <text x="1014.5" y="394" font-size="11" text-anchor="end">w</text>
 </g>
</svg>
<div id="pal" class="a"><div class="a" style="left:0;top:0px;width:34px;height:31px;background:#cd9961"></div><svg class="a" style="left:0;top:0px" width="34" height="31" viewBox="0 0 34 31"><path d="M7.7 7h16l-6.5 8v6.5l-4 3.8V15z" fill="#e4e4e4"/><path d="M10 8.3l4.5 6.5v8" fill="none" stroke="#d9b58c" stroke-width="1"/><rect x="16.5" y="12" width="10" height="8.5" fill="#cd9961" stroke="#e4e4e4" stroke-width="1"/><path d="M17.8 14h7.6v5.2h-7.6z" fill="#d9b58c"/><path d="M20.3 14v5.2M22.8 14v5.2" stroke="#e4e4e4" stroke-width="1"/></svg><div class="a" style="left:0;top:31px;width:34px;height:1px;background:#e4e1dd"></div><div class="a" style="left:0;top:32px;width:34px;height:31px;background:#cd9961"></div><svg class="a" style="left:0;top:32px" width="34" height="31" viewBox="0 0 34 31"><path d="M8.5 11.5A9 9 0 0 1 25 12.5M24.8 17.5A9 9 0 0 1 8.2 16.5" fill="none" stroke="#e4e4e4" stroke-width="1.2"/><path d="M4.8 17h6l-3-5zM22 12.5h6l-3 5z" fill="#e4e4e4"/><circle cx="16.5" cy="12" r="2.2" fill="#e4e4e4"/><path d="M12.3 19.3c0-4.5 8.4-4.5 8.4 0z" fill="#e4e4e4"/><path d="M28 22.5l3.5 3.2-3.5 3.2z" fill="#e4e4e4"/></svg><div class="a" style="left:0;top:63px;width:34px;height:1px;background:#e4e1dd"></div><div class="a" style="left:0;top:64px;width:34px;height:31px;background:#cd9961"></div><svg class="a" style="left:0;top:64px" width="34" height="31" viewBox="0 0 34 31"><path d="M8.5 13.5a11 11 0 0 1 16 0M10.8 16a7.5 7.5 0 0 1 11.4 0M13.2 18.5a4 4 0 0 1 6.6 0" fill="none" stroke="#e4e4e4" stroke-width="1.6"/><circle cx="16.5" cy="21" r="1.9" fill="#e4e4e4"/></svg><div class="a" style="left:0;top:95px;width:34px;height:1px;background:#e4e1dd"></div><div class="a" style="left:0;top:96px;width:34px;height:31px;background:#cd9961"></div><svg class="a" style="left:0;top:96px" width="34" height="31" viewBox="0 0 34 31"><path d="M16.7 7l2.8 5.9 6.4.7-4.8 4.3 1.3 6.3-5.7-3.3-5.7 3.3 1.3-6.3-4.8-4.3 6.4-.7z" fill="#e4e4e4"/></svg><div class="a" style="left:0;top:127px;width:34px;height:1px;background:#e4e1dd"></div><div class="a" style="left:0;top:128px;width:34px;height:31px;background:#cd9961"></div><svg class="a" style="left:0;top:128px" width="34" height="31" viewBox="0 0 34 31"><rect x="9" y="5.3" width="5" height="5" fill="#e4e4e4"/><rect x="9" y="21.3" width="5" height="5" fill="#e4e4e4"/><path d="M14 7.8h6.5v16h-6.5" fill="none" stroke="#e0c29f" stroke-width="1"/><path d="M20 12l1.3 2.8 3 .3-2.3 2 .7 3-2.7-1.6-2.7 1.6.7-3-2.3-2 3-.3z" fill="#e4e4e4"/><path d="M28 22.5l3.5 3.2-3.5 3.2z" fill="#e4e4e4"/></svg><div class="a" style="left:0;top:159px;width:34px;height:1px;background:#e4e1dd"></div><div class="a" style="left:0;top:160px;width:34px;height:31px;background:#cd9961"></div><svg class="a" style="left:0;top:160px" width="34" height="31" viewBox="0 0 34 31"><path d="M24.5 12.5a8 8 0 1 1-3.5-4.5M9.8 18.5" fill="none" stroke="#e4e4e4" stroke-width="1.4"/><path d="M21 5.5l3.5 3-4 1.5zM9 19l-1 4 3.6-1.5z" fill="#e4e4e4"/><path d="M16.5 10.5v6h4" fill="none" stroke="#e4e4e4" stroke-width="1.4"/></svg><div class="a" style="left:0;top:191px;width:34px;height:1px;background:#e4e1dd"></div><div class="a" style="left:0;top:192px;width:34px;height:31px;background:#cd9961"></div><svg class="a" style="left:0;top:192px" width="34" height="31" viewBox="0 0 34 31"><path d="M10.5 10.5l12 11M22.5 10.5l-12 11" stroke="#e4e4e4" stroke-width="3"/></svg><div class="a" style="left:0;top:223px;width:34px;height:1px;background:#e4e1dd"></div><div class="a" style="left:0;top:224px;width:34px;height:2px;background:#c6c6c6"></div><div class="a" style="left:0;top:226px;width:34px;height:1px;background:#e4e4e4"></div><div class="a" style="left:0;top:227px;width:34px;height:31px;background:#9b9ac6"></div><svg class="a" style="left:0;top:227px" width="34" height="31" viewBox="0 0 34 31"><path d="M8.8 9.6h16.6v12.3H8.8z" fill="#e4e4e4"/><path d="M8.8 9.6l8.3 7 8.3-7" fill="none" stroke="#9b9ac6" stroke-width="1.3"/></svg><div class="a" style="left:0;top:258px;width:34px;height:1px;background:#e2e2e6"></div><div class="a" style="left:0;top:259px;width:34px;height:31px;background:#9b9ac6"></div><svg class="a" style="left:0;top:259px" width="34" height="31" viewBox="0 0 34 31"><path d="M13.5 11.5V7.2h13v10.8h-5" fill="none" stroke="#e4e4e4" stroke-width="1.2"/><rect x="7.3" y="12" width="14" height="11.6" fill="none" stroke="#e4e4e4" stroke-width="1.2"/><circle cx="26.3" cy="8.4" r="2" fill="#e4e4e4"/><circle cx="20.3" cy="13.3" r="2" fill="#e4e4e4"/><path d="M28 22.5l3.5 3.2-3.5 3.2z" fill="#e4e4e4"/></svg><div class="a" style="left:0;top:290px;width:34px;height:1px;background:#e2e2e6"></div><div class="a" style="left:0;top:291px;width:34px;height:31px;background:#9b9ac6"></div><svg class="a" style="left:0;top:291px" width="34" height="31" viewBox="0 0 34 31"><rect x="12" y="6.8" width="11" height="18" rx="1" fill="none" stroke="#e4e4e4" stroke-width="1.6"/><rect x="12" y="21.5" width="11" height="3.8" fill="#e4e4e4"/><path d="M16.2 23.4h2.6" stroke="#9b9ac6" stroke-width="1.3"/><path d="M28 22.5l3.5 3.2-3.5 3.2z" fill="#e4e4e4"/></svg><div class="a" style="left:0;top:322px;width:34px;height:1px;background:#e2e2e6"></div><div class="a" style="left:0;top:323px;width:34px;height:31px;background:#9b9ac6"></div><svg class="a" style="left:0;top:323px" width="34" height="31" viewBox="0 0 34 31"><path d="M8.6 19v1.2c0 1.9 3.5 3.2 7.8 3.2s7.8-1.3 7.8-3.2V19z" fill="#e4e4e4"/><path d="M8.6 15.5v1.8c0 1.9 3.5 3.2 7.8 3.2s7.8-1.3 7.8-3.2v-1.8z" fill="#e4e4e4"/><path d="M8.6 12v2.2c0 1.9 3.5 3.2 7.8 3.2s7.8-1.3 7.8-3.2V12z" fill="#e4e4e4"/><ellipse cx="16.4" cy="12" rx="7.8" ry="3.3" fill="#e4e4e4"/><path d="M8.6 14.6c0 1.9 3.5 3.2 7.8 3.2s7.8-1.3 7.8-3.2M8.6 17.9c0 1.9 3.5 3.2 7.8 3.2s7.8-1.3 7.8-3.2" fill="none" stroke="#9b9ac6" stroke-width=".9"/><path d="M13.5 11.3l2.3 2 4-3.8" fill="none" stroke="#9b9ac6" stroke-width="1.5"/></svg><div class="a" style="left:0;top:354px;width:34px;height:1px;background:#e2e2e6"></div><div class="a" style="left:0;top:355px;width:34px;height:31px;background:#9b9ac6"></div><svg class="a" style="left:0;top:355px" width="34" height="31" viewBox="0 0 34 31"><path d="M8.6 19v1.2c0 1.9 3.5 3.2 7.8 3.2s7.8-1.3 7.8-3.2V19z" fill="#e4e4e4"/><path d="M8.6 15.5v1.8c0 1.9 3.5 3.2 7.8 3.2s7.8-1.3 7.8-3.2v-1.8z" fill="#e4e4e4"/><path d="M8.6 12v2.2c0 1.9 3.5 3.2 7.8 3.2s7.8-1.3 7.8-3.2V12z" fill="#e4e4e4"/><ellipse cx="16.4" cy="12" rx="7.8" ry="3.3" fill="#e4e4e4"/><path d="M8.6 14.6c0 1.9 3.5 3.2 7.8 3.2s7.8-1.3 7.8-3.2M8.6 17.9c0 1.9 3.5 3.2 7.8 3.2s7.8-1.3 7.8-3.2" fill="none" stroke="#9b9ac6" stroke-width=".9"/><path d="M12.5 12h6M16.8 9.8l2.5 2.2-2.5 2.2" fill="none" stroke="#9b9ac6" stroke-width="1.5"/></svg><div class="a" style="left:0;top:386px;width:34px;height:1px;background:#e2e2e6"></div><div class="a" style="left:0;top:387px;width:34px;height:31px;background:#9b9ac6"></div><svg class="a" style="left:0;top:387px" width="34" height="31" viewBox="0 0 34 31"><circle cx="17.2" cy="16.3" r="8.6" fill="none" stroke="#e4e4e4" stroke-width="1.3"/><ellipse cx="17.2" cy="16.3" rx="3.6" ry="8.6" fill="none" stroke="#e4e4e4" stroke-width="1.2"/><path d="M9 13h16.4M9 19.6h16.4M17.2 7.7v17.2" stroke="#e4e4e4" stroke-width="1.2"/></svg><div class="a" style="left:0;top:418px;width:34px;height:1px;background:#e2e2e6"></div><div class="a" style="left:0;top:419px;width:34px;height:31px;background:#9b9ac6"></div><svg class="a" style="left:0;top:419px" width="34" height="31" viewBox="0 0 34 31"><circle cx="17.2" cy="9.5" r="2" fill="none" stroke="#e4e4e4" stroke-width="1.4"/><path d="M17.2 5v2.5M16 11.5l-5 14.5M18.4 11.5l5 14.5M11 22l2.5-2M23.5 22l-2.5-2" fill="none" stroke="#e4e4e4" stroke-width="1.6"/></svg><div class="a" style="left:0;top:450px;width:34px;height:1px;background:#e2e2e6"></div><div class="a" style="left:0;top:451px;width:34px;height:2px;background:#c6c6c6"></div><div class="a" style="left:0;top:453px;width:34px;height:1px;background:#e4e4e4"></div><div class="a" style="left:0;top:454px;width:34px;height:31px;background:#878787"></div><svg class="a" style="left:0;top:454px" width="34" height="31" viewBox="0 0 34 31"><circle cx="10.4" cy="15.9" r="2.7" fill="#e4e4e4"/><path d="M13.2 13.2l4.6-4.6M13.8 15.9h6.2M13.2 18.6l4.6 4.6" stroke="#e4e4e4" stroke-width="2.4"/><path d="M16.2 7.1h3.9v3.9zM20 13.6l3.2 2.3-3.2 2.3zM16.2 24.7h3.9v-3.9z" fill="#e4e4e4"/></svg><div class="a" style="left:0;top:485px;width:34px;height:1px;background:#dfdfdf"></div><div class="a" style="left:0;top:486px;width:34px;height:31px;background:#878787"></div><svg class="a" style="left:0;top:486px" width="34" height="31" viewBox="0 0 34 31"><circle cx="12.3" cy="11.3" r="2.5" fill="none" stroke="#e4e4e4" stroke-width="1.8"/><circle cx="21.5" cy="20.2" r="2.5" fill="none" stroke="#e4e4e4" stroke-width="1.8"/><path d="M10.5 22.8L24.5 8.5" stroke="#e4e4e4" stroke-width="1.6"/></svg><div class="a" style="left:0;top:517px;width:34px;height:1px;background:#dfdfdf"></div><div class="a" style="left:0;top:518px;width:34px;height:31px;background:#878787"></div><svg class="a" style="left:0;top:518px" width="34" height="31" viewBox="0 0 34 31"><path d="M14 7.8l-1.6 15.9M20 7.8l-1.6 15.9M10 12.3h13M9.5 19h13" stroke="#e4e4e4" stroke-width="1.9"/></svg><div class="a" style="left:0;top:549px;width:34px;height:1px;background:#dfdfdf"></div><div class="a" style="left:0;top:550px;width:34px;height:31px;background:#878787"></div><svg class="a" style="left:0;top:550px" width="34" height="31" viewBox="0 0 34 31"><circle cx="16.6" cy="15.5" r="8.3" fill="none" stroke="#e4e4e4" stroke-width="2" stroke-dasharray="4.2 3.1" transform="rotate(-60 16.6 15.5)"/><circle cx="15.1" cy="7.3" r="1.7" fill="#e4e4e4"/><circle cx="9.5" cy="20.5" r="2.7" fill="#e4e4e4"/><circle cx="24.4" cy="16.6" r="2.7" fill="#e4e4e4"/></svg><div class="a" style="left:0;top:581px;width:34px;height:1px;background:#dfdfdf"></div><div class="a" style="left:0;top:582px;width:34px;height:31px;background:#878787"></div><svg class="a" style="left:0;top:582px" width="34" height="31" viewBox="0 0 34 31"><path d="M13 18l-2 6.5 2.3-.8 1.5 1.6 2.2-6.3M20.5 18l2 6.5-2.3-.8-1.5 1.6-2.2-6.3" fill="#e4e4e4"/><circle cx="17" cy="13" r="5" fill="#e4e4e4"/><circle cx="17" cy="13" r="5.8" fill="none" stroke="#e4e4e4" stroke-width="1.3" stroke-dasharray="1.4 1.1"/><circle cx="17" cy="13" r="2.2" fill="#878787"/></svg><div class="a" style="left:0;top:613px;width:34px;height:1px;background:#dfdfdf"></div><div class="a" style="left:0;top:614px;width:34px;height:31px;background:#878787"></div><svg class="a" style="left:0;top:614px" width="34" height="31" viewBox="0 0 34 31"><circle cx="15.3" cy="9.3" r="3.8" fill="#e4e4e4"/><path d="M7 25.4c0-6 3.5-9.2 8.3-9.2 3.5 0 5.5 1.5 6.8 3.8V25.4z" fill="#e4e4e4"/><circle cx="21.3" cy="21" r="5" fill="#878787" stroke="#e4e4e4" stroke-width="1.3"/><path d="M20.6 18.5l.8 2.4 1.3 1.2" fill="none" stroke="#e4e4e4" stroke-width="1"/></svg><div class="a" style="left:0;top:645px;width:34px;height:1px;background:#dfdfdf"></div><div class="a" style="left:0;top:646px;width:34px;height:31px;background:#878787"></div><svg class="a" style="left:0;top:646px" width="34" height="31" viewBox="0 0 34 31"><path d="M6.6 23.2h20.5" stroke="#e4e4e4" stroke-width="2.2"/><path d="M9 17.5l16-9" stroke="#e4e4e4" stroke-width="1.5" stroke-dasharray="1.3 .9"/><path d="M9.5 16v6M8 19.5h3" stroke="#e4e4e4" stroke-width="1.6"/><circle cx="24.3" cy="20.8" r="1.2" fill="#e4e4e4"/></svg><div class="a" style="left:0;top:677px;width:34px;height:1px;background:#dfdfdf"></div><div class="a" style="left:0;top:678px;width:34px;height:2px;background:#c6c6c6"></div><div class="a" style="left:0;top:680px;width:34px;height:1px;background:#e4e4e4"></div><div class="a" style="left:0;top:681px;width:34px;height:31px;background:#dedede;border:1px solid #acacac"></div><svg class="a" style="left:7px;top:687px" width="20" height="20" viewBox="0 0 20 20"><path d="M0 0h10l10 10v10H0z" fill="#d2cb62"/><path d="M10 0l10 10H10z" fill="#c2b85a"/></svg><div class="a" style="left:0;top:712px;width:34px;height:3px;background:#c4c4c4"></div><div class="a" style="left:0;top:715px;width:34px;height:10px;background:#d6d6d6;background-image:repeating-linear-gradient(45deg,rgba(255,255,255,.3) 0 1px,rgba(0,0,0,0) 1px 3.5px)"></div></div>

<!-- DIALOG -->
<div id="dlg" class="a">
 <div class="a" style="left:0;top:0;width:475px;height:53px;background:linear-gradient(#f5f5f5,#efefef);border-bottom:1px solid #c8cfd6"></div>
 <div class="t" style="left:14px;top:19.6px;font-size:13.8px;font-weight:bold;color:#1f1f1f">Settings</div>
 <div class="dbtn" style="left:79px;top:12px;width:71px;height:28px;line-height:26px">Show all</div>
 <svg class="a" style="left:448px;top:20px" width="12" height="12" viewBox="0 0 12 12"><path d="M1.5 1.5l9 9M10.5 1.5l-9 9" stroke="#858585" stroke-width="1.7"/></svg>
 <div class="sec" style="top:53px"><div class="tri" style="left:19px;top:17px;border-left:6px solid #333;border-top:5px solid transparent;border-bottom:5px solid transparent"></div><div class="t">General</div></div>
 <div class="sec" style="top:97px"><div class="tri" style="left:19px;top:17px;border-left:6px solid #333;border-top:5px solid transparent;border-bottom:5px solid transparent"></div><div class="t">Options</div></div>
 <div class="sec" style="top:141px;height:45px"><div class="tri" style="left:17px;top:19px;border-top:6px solid #333;border-left:5px solid transparent;border-right:5px solid transparent"></div><div class="t">Tracking and variables</div></div>
 <div class="t" style="left:45px;top:222px;font-size:12px;color:#333">Entry tracking</div>
 <svg class="a" style="left:128px;top:218px" width="16" height="16" viewBox="0 0 16 16"><circle cx="8" cy="8" r="8" fill="#8a8d91"/><text x="8" y="12.6" font-family="Liberation Sans" font-weight="bold" font-size="13" fill="#f4f4f4" text-anchor="middle">?</text></svg>
 <div class="t" style="left:45px;top:249px;font-size:12px;color:#333">What information would you like to track per program entry?</div>
 <svg class="a" style="left:47px;top:274px" width="36" height="16" viewBox="0 0 36 16"><circle cx="8" cy="8" r="8" fill="#4e5869"/><path d="M8 3.5v9M3.5 8h9" stroke="#fff" stroke-width="2.2"/><circle cx="28" cy="8" r="8" fill="#4e5869"/><path d="M23.5 8h9" stroke="#fff" stroke-width="2.2"/></svg>
 <div class="a" style="left:45px;top:300px;width:385px;height:144px;background:#fff"></div>
 <div class="a" style="left:45px;top:300px;width:385px;height:36px;background:#eff2f5;border-bottom:2px solid #c6cacd"></div>
 <div class="a" style="left:289px;top:300px;width:1px;height:34px;background:#c9ced4"></div>
 <div class="t" style="left:55px;top:311px;font-size:12px;font-weight:bold;color:#545454">Name</div>
 <svg class="a" style="left:92px;top:311px" width="10" height="12" viewBox="0 0 10 12"><path d="M5 0L10 5H6.1v7H3.9V5H0z" fill="#8f8f8f"/></svg>
 <div class="t" style="left:300px;top:311px;font-size:12px;font-weight:bold;color:#545454">Type</div>
 <div class="a" style="left:45px;top:336px;width:385px;height:30px;background:#c6dcf1"></div>
 <div class="t" style="left:55px;top:345px;font-size:12px;color:#2e2e2e">LAST_MESSAGE_STATUS</div>
 <div class="t" style="left:300px;top:345px;font-size:12px;color:#2e2e2e">Text</div>
 <div class="dbtn" style="left:45px;top:464px;width:111px;height:28px;line-height:26px">Event Variables</div>
 <div class="a" style="left:0;top:521px;width:475px;height:41px;background:linear-gradient(#f3f3f3,#f0f0f0);border-top:1px solid #c8cdd2"></div>
 <div class="dbtn" style="left:310px;top:528px;width:75px;height:28px;line-height:26px">Cancel</div>
 <div class="dbtn" style="left:390px;top:528px;width:75px;height:28px;line-height:26px">OK</div>
</div>
</body></html>
